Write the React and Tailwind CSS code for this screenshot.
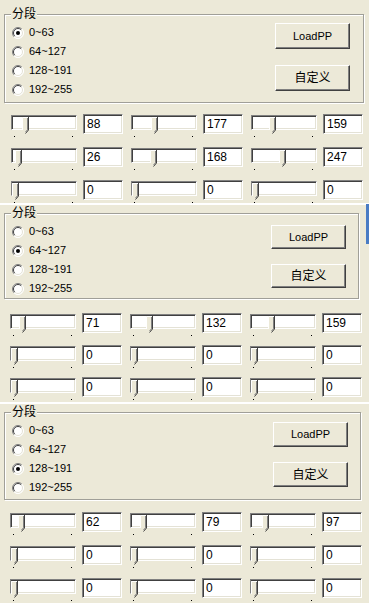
const panels = [
  {
    selected: 0,
    line: false,
    wrap: "h-[203px] pt-[14px]",
    box: "ml-[4px] w-[360px] h-[89px]",
    btns: "pt-[8px] pr-[13px] gap-[16px]",
    btnH: "h-[26px]",
    rows: "mt-[11px] pl-[11px] gap-[10px]",
    values: [
      [88, 177, 159],
      [26, 168, 247],
      [0, 0, 0],
    ],
  },
  {
    selected: 1,
    line: true,
    wrap: "h-[199px] pt-[10px]",
    box: "ml-[4px] w-[355px] h-[86px]",
    btns: "pt-[11px] pr-[12px] gap-[15px]",
    btnH: "h-[24px]",
    rows: "mt-[14px] pl-[10px] gap-[9px]",
    values: [
      [71, 132, 159],
      [0, 0, 0],
      [0, 0, 0],
    ],
  },
  {
    selected: 2,
    line: true,
    wrap: "h-[201px] pt-[10px]",
    box: "ml-[4px] w-[357px] h-[88px]",
    btns: "pt-[9px] pr-[12px] gap-[15px]",
    btnH: "h-[25px]",
    rows: "mt-[12px] pl-[10px] gap-[10px]",
    values: [
      [62, 79, 97],
      [0, 0, 0],
      [0, 0, 0],
    ],
  },
];

const ranges = ["0~63", "64~127", "128~191", "192~255"];

export default function App() {
  return (
    <div className="relative w-[369px] h-[603px] overflow-hidden bg-[#ece9d8] text-black font-['Liberation_Sans','Noto_Sans_CJK_SC',sans-serif] text-[11px]">
      {panels.map((p, i) => (
        <Panel key={i} {...p} />
      ))}
      {/* blue edge of the window behind the second shot */}
      <div className="absolute right-0 top-[204px] w-[3px] h-[40px] bg-[#4a7cc4]" />
    </div>
  );
}

function Panel({ selected, line, wrap, box, btns, btnH, rows, values }) {
  return (
    <div className={wrap + " relative"}>
      {line && <div className="absolute left-0 right-0 top-0 h-[2px] bg-white" />}
      <div
        className={
          box +
          " relative flex justify-between border border-[#a09f98] shadow-[inset_1px_1px_0_#fff,1px_1px_0_#fff]"
        }
      >
        <span className="absolute -top-[8px] left-[6px] px-px bg-[#ece9d8] text-[12px] leading-[14px]">
          分段
        </span>
        <div className="flex flex-col pt-[8px] pl-[7px]">
          {ranges.map((r, i) => (
            <div key={r} className="flex items-center h-[19px] gap-[5px]">
              <Radio checked={i === selected} />
              <span className="leading-[13px]">{r}</span>
            </div>
          ))}
        </div>
        <div className={btns + " flex flex-col"}>
          <Button h={btnH}>LoadPP</Button>
          <Button h={btnH}>
            <span className="text-[12px]">自定义</span>
          </Button>
        </div>
      </div>
      <div className={rows + " flex flex-col"}>
        {values.map((row, r) => (
          <div key={r} className="flex gap-[8px]">
            {row.map((v, c) => (
              <div key={c} className="flex gap-[6px]">
                <Slider value={v} />
                <Field value={v} />
              </div>
            ))}
          </div>
        ))}
      </div>
    </div>
  );
}

function Radio({ checked }) {
  return (
    <svg width="12" height="12" viewBox="0 0 12 12">
      <circle cx="6" cy="6" r="5.5" fill="#fff" />
      <path d="M2.1 9.9 A5.5 5.5 0 0 1 9.9 2.1" stroke="#808080" fill="none" />
      <path d="M2.8 9.2 A4.5 4.5 0 0 1 9.2 2.8" stroke="#404040" fill="none" />
      <path d="M9.9 2.1 A5.5 5.5 0 0 1 2.1 9.9" stroke="#fff" fill="none" />
      <path d="M9.2 2.8 A4.5 4.5 0 0 1 2.8 9.2" stroke="#e4e2d6" fill="none" />
      {checked && <circle cx="6" cy="6" r="2" fill="#000" />}
    </svg>
  );
}

function Button({ h, children }) {
  return (
    <button
      className={
        h +
        " w-[75px] flex items-center justify-center bg-[#ece9d8] border border-t-white border-l-white border-b-[#404040] border-r-[#404040] shadow-[inset_-1px_-1px_0_#808080] leading-none"
      }
    >
      {children}
    </button>
  );
}

function Slider({ value }) {
  const left = 1 + Math.round(value * 0.11);
  return (
    <div className="relative w-[66px] h-[23px]">
      <div className="mt-px h-[15px] bg-white border border-t-[#808080] border-l-[#808080] border-b-white border-r-white shadow-[inset_1px_1px_0_#404040,inset_-1px_-1px_0_#e4e2d6]" />
      <svg className="absolute top-[3px]" style={{ left }} width="7" height="17" viewBox="0 0 7 17">
        <polygon points="0,0 7,0 7,13 3.5,16.5 0,13" fill="#ece9d8" />
        <path d="M0.5 13 V0.5 H6" stroke="#fff" fill="none" />
        <path d="M5.5 1 V12.8 L3.5 15" stroke="#808080" fill="none" />
        <path d="M6.5 0 V13 L3.5 16.5" stroke="#404040" fill="none" />
      </svg>
      <div className="absolute left-[3px] top-[22px] w-px h-px bg-black" />
      <div className="absolute left-[61px] top-[22px] w-px h-px bg-black" />
    </div>
  );
}

function Field({ value }) {
  return (
    <div className="w-[40px] h-[20px] bg-white border border-t-[#808080] border-l-[#808080] border-b-white border-r-white shadow-[inset_1px_1px_0_#404040,inset_-1px_-1px_0_#e4e2d6] pl-[3px] text-[12px] leading-[18px]">
      {value}
    </div>
  );
}
